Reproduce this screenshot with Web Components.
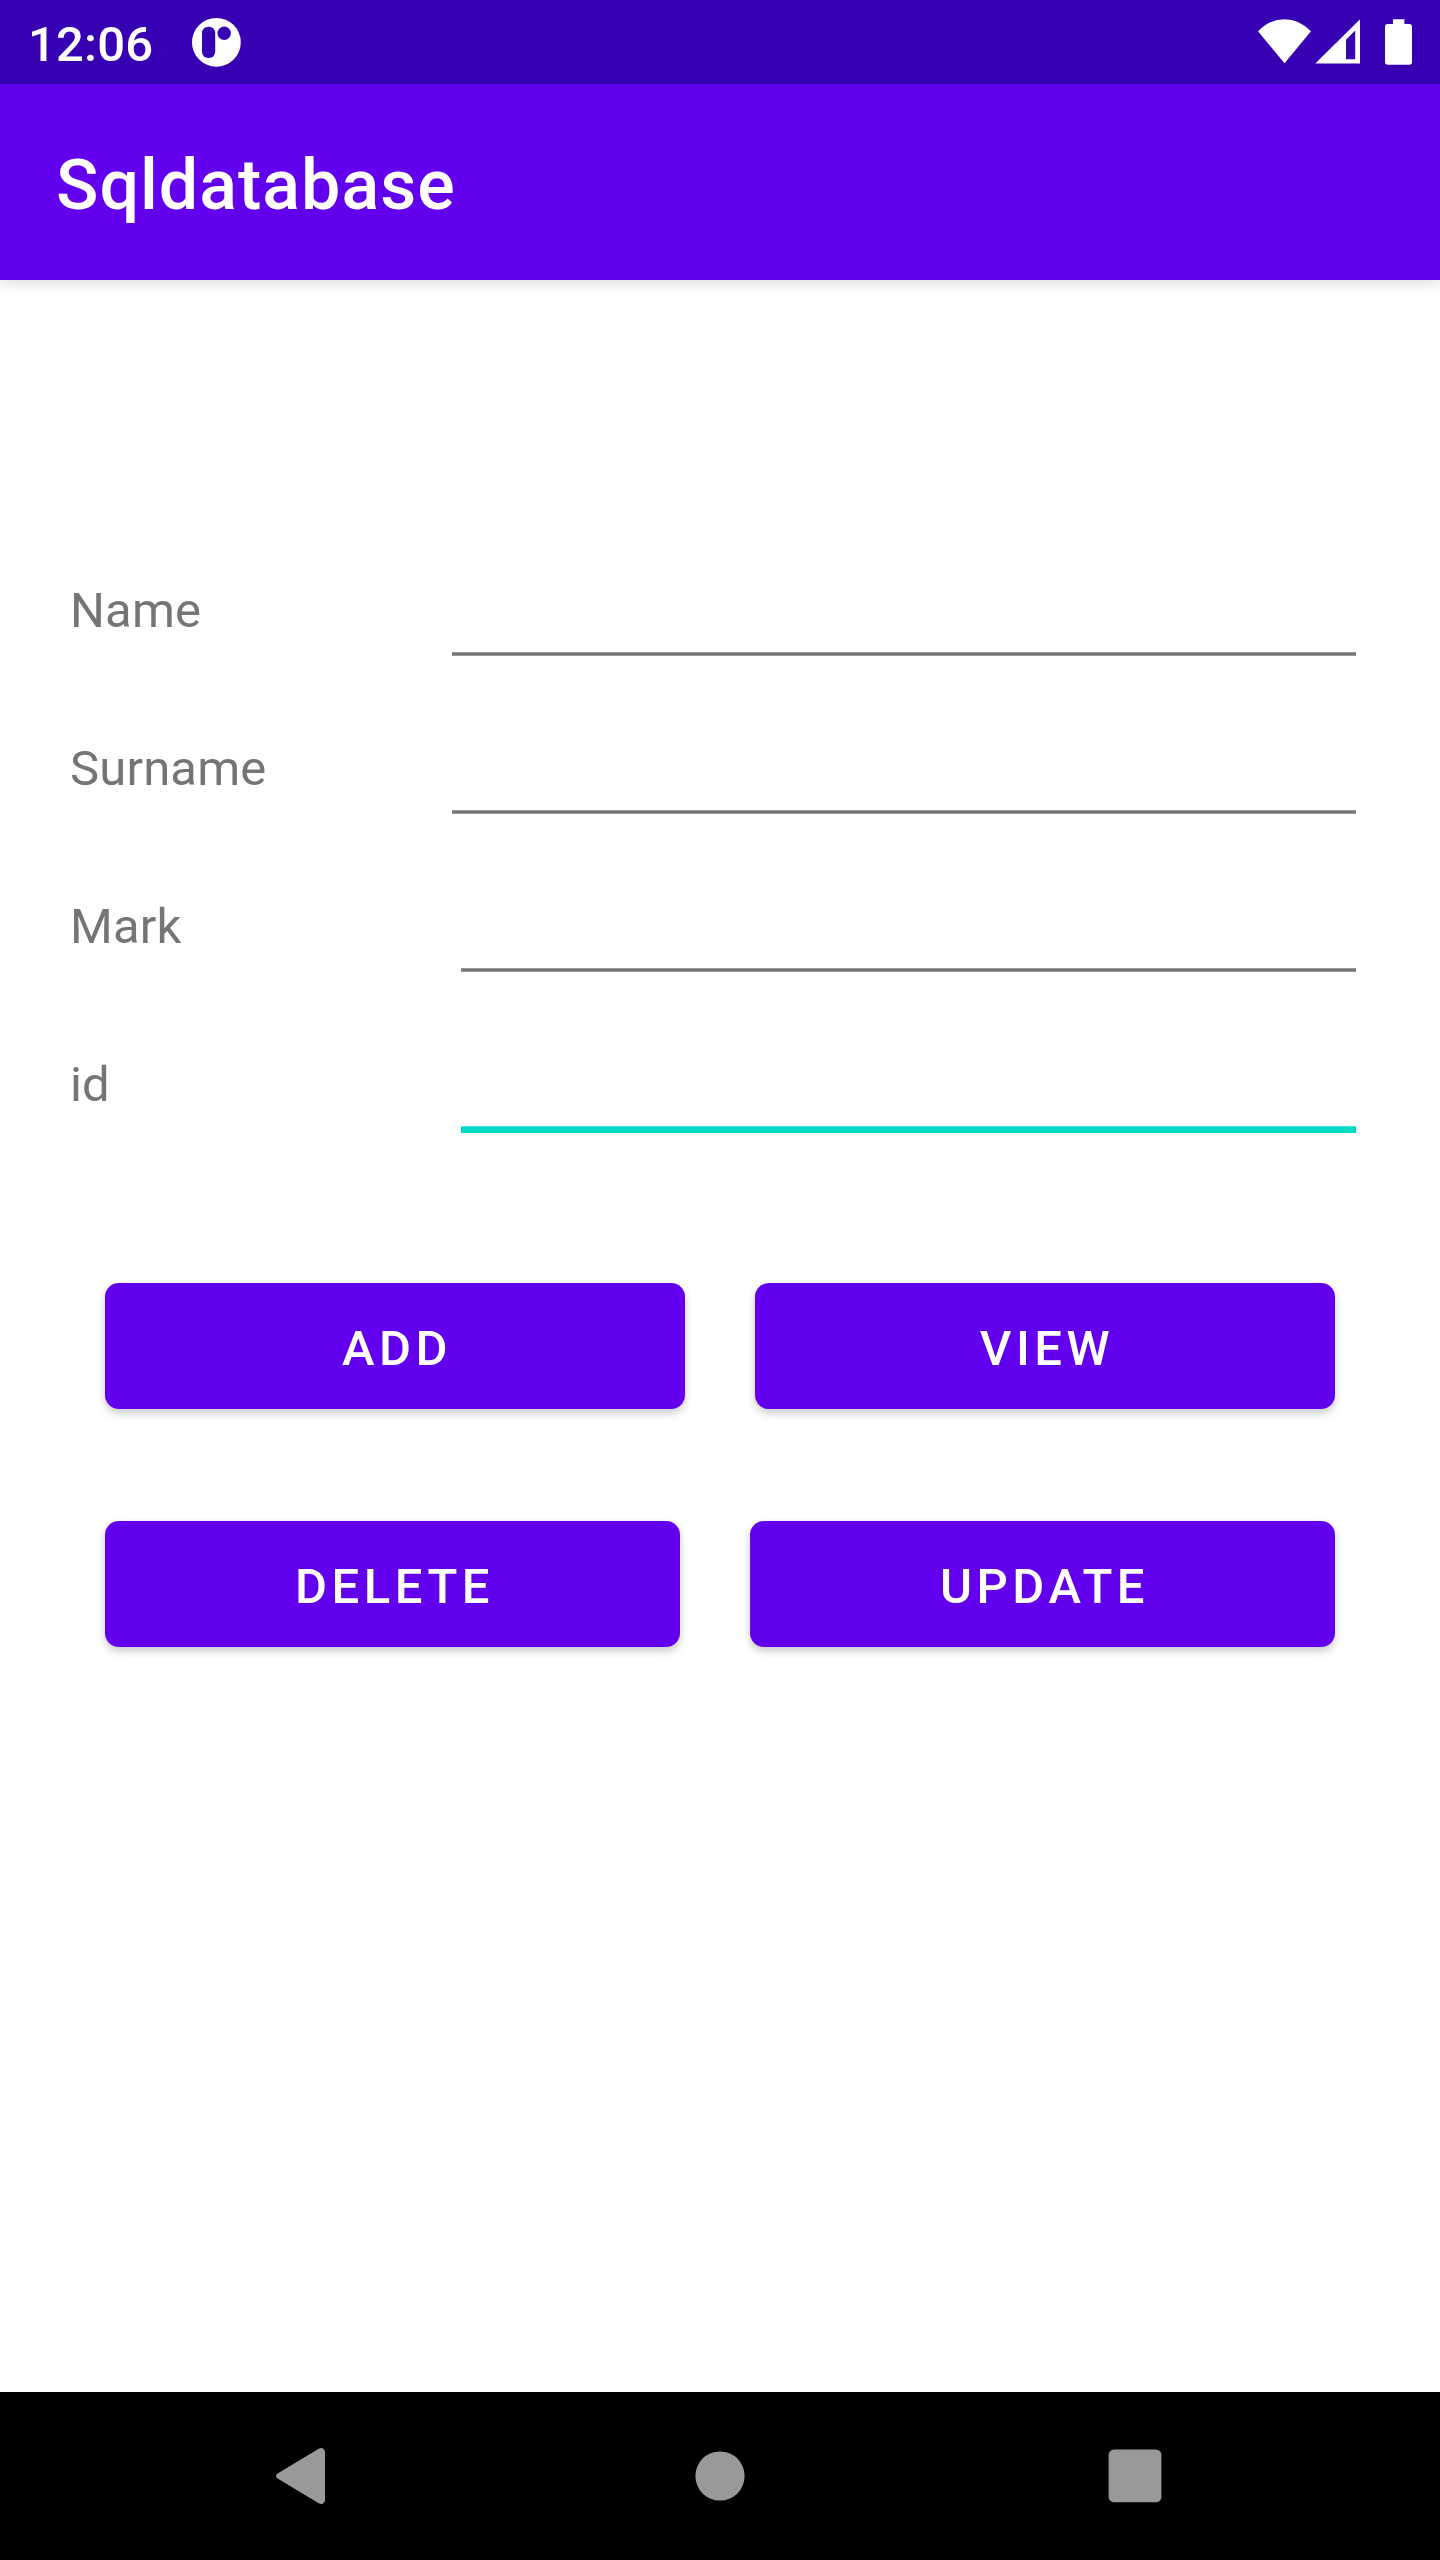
<!DOCTYPE html>
<html lang="en">
<head>
<meta charset="utf-8">
<title>Sqldatabase</title>
<style>
  html, body { margin: 0; background: #fff; }
</style>
</head>
<body>
<database-screen></database-screen>
<script>
class Base extends HTMLElement {
  constructor() {
    super();
    this.attachShadow({ mode: 'open' }).innerHTML = this.constructor.markup;
  }
}

customElements.define('status-bar', class extends Base {
  static markup = `
    <style>
      :host { display: flex; justify-content: space-between; height: 84px; background: #3700b3; color: #fff; flex: none; }
      .left { display: flex; align-items: flex-start; padding-left: 28px; }
      .clock { font: 500 49px/57px Roboto, sans-serif; letter-spacing: .2px; padding-top: 16px; width: 124px; white-space: nowrap; }
      svg { display: block; flex: none; }
      .p { margin: 0 0 0 35px; }
    </style>
    <div class="left">
      <span class="clock"><slot></slot></span>
      <svg class="p" width="60" height="84" viewBox="187 0 60 84">
        <circle cx="216.4" cy="42.3" r="24.4" fill="#fff"/>
        <rect x="202" y="26.7" width="13.2" height="31.3" rx="6.2" fill="#3700b3"/>
        <circle cx="224.2" cy="33.3" r="6.7" fill="#3700b3"/>
      </svg>
    </div>
    <svg width="190" height="84" viewBox="1250 0 190 84" fill="#fff">
      <path d="M1284.5 63.3 1258 31.3Q1269.5 19.2 1284.5 19.2T1311 31.3Z"/>
      <path fill-rule="evenodd" d="M1315.3 63.6H1360V19.3ZM1346 59.2V39.8L1355.2 30.6V59.2Z"/>
      <path d="M1393 19.2H1404.4V24H1409.3Q1412 24 1412 26.7V62Q1412 64.7 1409.3 64.7H1387.7Q1385 64.7 1385 62V26.7Q1385 24 1387.7 24H1393Z"/>
    </svg>`;
});

customElements.define('app-bar', class extends Base {
  static markup = `
    <style>
      :host { display: block; flex: none; box-sizing: border-box; height: 196px; padding: 60px 56px 0; background: #6200ee;
        box-shadow: 0 5px 14px rgba(0,0,0,.11), 0 1px 4px rgba(0,0,0,.03);
        color: #fff; font: 500 70px/82px Roboto, sans-serif; letter-spacing: 1px; }
    </style><slot></slot>`;
});

customElements.define('text-field', class extends Base {
  static markup = `
    <style>
      :host { display: flex; justify-content: space-between; height: 158px; padding: 0 84px 0 70px; --w: 904px; }
      :host([narrow]) { --w: 895px; }
      label { margin-top: 34px; font: 400 49px/57px Roboto, sans-serif; letter-spacing: .15px; color: #757575; }
      svg { display: block; width: var(--w); height: 8px; margin-top: 104px; }
      .on { display: none; }
      :host([active]) .on { display: inline; }
      :host([active]) .off { display: none; }
    </style>
    <label><slot></slot></label>
    <svg><rect class="off" y=".25" width="100%" height="3.5" fill="#757575"/><rect class="on" y=".25" width="100%" height="6.75" fill="#03dac5"/></svg>`;
});

customElements.define('material-button', class extends Base {
  static markup = `
    <style>
      :host { display: flex; }
      button { flex: 1; box-sizing: border-box; height: 126px; margin: 0; padding: 5px 0 0 4px; border: 0; border-radius: 14px; background: #6200ee; color: #fff;
        font: 500 49px/57px Roboto, sans-serif; letter-spacing: 4.55px; text-align: center;
        box-shadow: 0 5px 9px rgba(0,0,0,.16), 0 1px 8px rgba(0,0,0,.07); }
    </style>
    <button><slot></slot></button>`;
});

customElements.define('button-row', class extends Base {
  static markup = `
    <style>
      :host { display: grid; grid-template-columns: var(--columns); gap: 70px; padding: 0 105px; }
    </style><slot></slot>`;
});

customElements.define('nav-bar', class extends Base {
  static markup = `
    <style>
      :host { display: flex; justify-content: space-between; align-items: center; box-sizing: border-box; height: 168px; padding: 0 265px; background: #000; flex: none; }
      svg { display: block; width: 80px; height: 80px; fill: #999; }
    </style>
    <svg viewBox="265 2436 80 80"><path d="M277.6 2473.4 318.7 2448.7Q321 2447.3 323 2448.5 325 2449.7 325 2452V2500Q325 2502.3 323 2503.5 321 2504.7 318.7 2503.3L277.6 2478.6Q276 2477.6 276 2476T277.6 2473.4Z"/></svg>
    <svg viewBox="680 2436 80 80"><circle cx="720" cy="2476" r="24.6"/></svg>
    <svg viewBox="1095 2436 80 80"><rect x="1108.6" y="2449.5" width="52.8" height="52.8" rx="5.5"/></svg>`;
});

customElements.define('database-screen', class extends Base {
  static markup = `
    <style>
      :host { display: flex; flex-direction: column; width: 1440px; height: 2560px; background: #fff; }
      main { flex: 1; display: flex; flex-direction: column; padding-top: 268px; }
      .buttons { display: flex; flex-direction: column; gap: 112px; margin-top: 103px; }
      .first { --columns: 580px 580px; }
      .second { --columns: 575px 585px; }
    </style>
    <status-bar>12:06</status-bar>
    <app-bar>Sqldatabase</app-bar>
    <main>
      <text-field>Name</text-field>
      <text-field>Surname</text-field>
      <text-field narrow>Mark</text-field>
      <text-field narrow active>id</text-field>
      <div class="buttons">
        <button-row class="first"><material-button>ADD</material-button><material-button>VIEW</material-button></button-row>
        <button-row class="second"><material-button>DELETE</material-button><material-button>UPDATE</material-button></button-row>
      </div>
    </main>
    <nav-bar></nav-bar>`;
});
</script>
</body>
</html>
